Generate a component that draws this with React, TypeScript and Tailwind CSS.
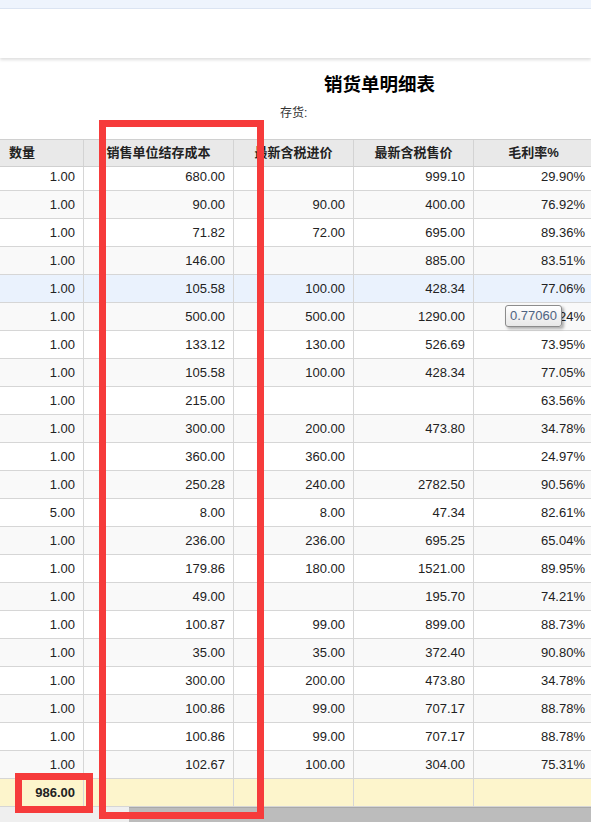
import React from 'react';

type Row = [string, string, string, string, string];

const rows: Row[] = [
  ['1.00', '680.00', '', '999.10', '29.90%'],
  ['1.00', '90.00', '90.00', '400.00', '76.92%'],
  ['1.00', '71.82', '72.00', '695.00', '89.36%'],
  ['1.00', '146.00', '', '885.00', '83.51%'],
  ['1.00', '105.58', '100.00', '428.34', '77.06%'],
  ['1.00', '500.00', '500.00', '1290.00', '61.24%'],
  ['1.00', '133.12', '130.00', '526.69', '73.95%'],
  ['1.00', '105.58', '100.00', '428.34', '77.05%'],
  ['1.00', '215.00', '', '', '63.56%'],
  ['1.00', '300.00', '200.00', '473.80', '34.78%'],
  ['1.00', '360.00', '360.00', '', '24.97%'],
  ['1.00', '250.28', '240.00', '2782.50', '90.56%'],
  ['5.00', '8.00', '8.00', '47.34', '82.61%'],
  ['1.00', '236.00', '236.00', '695.25', '65.04%'],
  ['1.00', '179.86', '180.00', '1521.00', '89.95%'],
  ['1.00', '49.00', '', '195.70', '74.21%'],
  ['1.00', '100.87', '99.00', '899.00', '88.73%'],
  ['1.00', '35.00', '35.00', '372.40', '90.80%'],
  ['1.00', '300.00', '200.00', '473.80', '34.78%'],
  ['1.00', '100.86', '99.00', '707.17', '88.78%'],
  ['1.00', '100.86', '99.00', '707.17', '88.78%'],
  ['1.00', '102.67', '100.00', '304.00', '75.31%']
];

// column widths incl. right border
const colW = ['w-[84px]', 'w-[150px]', 'w-[120px]', 'w-[120px]', 'w-[120px]'];

const App = () => {
  return <div className="relative w-[591px] h-[826px] overflow-hidden bg-white text-[#222] [font-family:'Liberation_Sans','Noto_Sans_CJK_SC',sans-serif]">
      {/* top strip */}
      <div className="h-[9px] bg-[#eef4fd] border-b border-[#dce5f3]" />
      <div className="h-[49px] bg-white shadow-[0_2px_3px_rgba(0,0,0,0.13)] relative z-10" />

      {/* title */}
      <div className="h-[81px] flex flex-col">
        <div className="pt-[15px] pl-[324px] text-[18.5px] leading-[24px] font-bold text-black">
          销货单明细表
        </div>
        <div className="mt-[8px] pl-[280px] text-[12px] leading-[16px] text-[#333]">存货:</div>
      </div>

      {/* header */}
      <div className="flex h-[28px] bg-[#e9e9e9] border-y border-[#d0d0d0] text-[13px] font-bold text-[#222]">
        <div className={`${colW[0]} shrink-0 border-r border-[#d3d3d3] pl-[9px] flex items-center`}>数量</div>
        <div className={`${colW[1]} shrink-0 border-r border-[#d3d3d3] flex items-center justify-center`}>销售单位结存成本</div>
        <div className={`${colW[2]} shrink-0 border-r border-[#d3d3d3] flex items-center justify-center`}>最新含税进价</div>
        <div className={`${colW[3]} shrink-0 border-r border-[#d3d3d3] flex items-center justify-center`}>最新含税售价</div>
        <div className={`${colW[4]} shrink-0 border-r border-[#d3d3d3] flex items-center justify-center`}>毛利率%</div>
      </div>

      {/* body */}
      <div className="text-[13px]">
        {rows.map((r, i) => <div key={i} className={`flex border-b border-[#d6d6d6] ${i === 0 ? 'h-[24px] pb-[4px]' : 'h-[28px]'} ${i === 4 ? 'bg-[#eaf2fd]' : i % 2 === 1 ? 'bg-[#f9f9f9]' : 'bg-white'}`}>
            {r.map((c, j) => <div key={j} className={`${colW[j]} shrink-0 border-r border-[#d6d6d6] pr-[8px] flex items-center justify-end ${i === 0 ? '-mb-[4px]' : ''}`}>
                <span className={i === 0 ? 'pb-[4px]' : ''}>{c}</span>
              </div>)}
          </div>)}
        {/* totals */}
        <div className="flex h-[28px] bg-[#fdf5cc] border-b border-[#d6d6d6]">
          <div className={`${colW[0]} shrink-0 border-r border-[#d6d6d6] pr-[8px] flex items-center justify-end font-bold`}>986.00</div>
          <div className={`${colW[1]} shrink-0 border-r border-[#d6d6d6]`} />
          <div className={`${colW[2]} shrink-0 border-r border-[#d6d6d6]`} />
          <div className={`${colW[3]} shrink-0 border-r border-[#d6d6d6]`} />
          <div className={`${colW[4]} shrink-0 border-r border-[#d6d6d6]`} />
        </div>
      </div>

      {/* horizontal scrollbar */}
      <div className="h-[15px] bg-[#efefef] flex">
        <div className="w-[129px]" />
        <div className="flex-1 bg-[#bcbcbc] border-t border-[#a9a9a9]" />
      </div>

      {/* tooltip */}
      <div className="absolute left-[505px] top-[305px] w-[57px] h-[22px] rounded-[3px] border border-[#8c8c8c] bg-gradient-to-b from-white to-[#e8e8e8] shadow-[2px_2px_3px_rgba(0,0,0,0.3)] flex items-center justify-center text-[13px] text-[#4f6381]">
        0.77060
      </div>

      {/* red annotation boxes */}
      <div className="absolute left-[99px] top-[120px] w-[165px] h-[699px] border-[7px] border-[#f63b3b]" />
      <div className="absolute left-[15px] top-[773px] w-[78px] h-[40px] border-[7px] border-[#f63b3b]" />
    </div>;
};

export default App;
